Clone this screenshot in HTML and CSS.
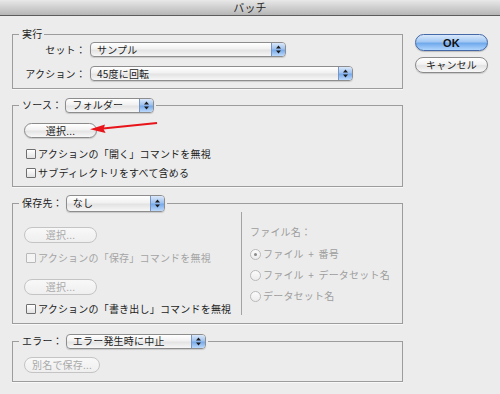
FILE: index.html
```html
<!DOCTYPE HTML>
<html>

<head>
  <meta charset="utf-8">
  <link rel="stylesheet" href="styles.css">
</head>

<body>
<div class="titlebar">バッチ</div>

<div class="dialog">
  <div class="main">

    <div class="group group-run">
      <div class="legend">実行</div>
      <div class="row">
        <span class="label">セット：</span>
        <div class="popup popup-set"><span class="popup-text">サンプル</span><span class="arrows"><svg width="5" height="9" viewBox="0 0 5 9"><path d="M0 3.5L2.5 0.5L5 3.5Z M0 5.5L2.5 8.5L5 5.5Z" fill="#1c1c1c"/></svg></span></div>
      </div>
      <div class="row row-next">
        <span class="label">アクション：</span>
        <div class="popup popup-action"><span class="popup-text">45度に回転</span><span class="arrows"><svg width="5" height="9" viewBox="0 0 5 9"><path d="M0 3.5L2.5 0.5L5 3.5Z M0 5.5L2.5 8.5L5 5.5Z" fill="#1c1c1c"/></svg></span></div>
      </div>
    </div>

    <div class="group group-source">
      <div class="legend">
        <span>ソース：</span>
        <div class="popup popup-folder"><span class="popup-text">フォルダー</span><span class="arrows"><svg width="5" height="9" viewBox="0 0 5 9"><path d="M0 3.5L2.5 0.5L5 3.5Z M0 5.5L2.5 8.5L5 5.5Z" fill="#1c1c1c"/></svg></span></div>
      </div>
      <div class="push push-choose">選択...</div>
      <label class="check check-first"><span class="box"></span>アクションの「開く」コマンドを無視</label>
      <label class="check check-next"><span class="box"></span>サブディレクトリをすべて含める</label>
    </div>

    <div class="group group-save">
      <div class="legend legend-tall">
        <span>保存先：</span>
        <div class="popup popup-none"><span class="popup-text">なし</span><span class="arrows"><svg width="5" height="9" viewBox="0 0 5 9"><path d="M0 3.5L2.5 0.5L5 3.5Z M0 5.5L2.5 8.5L5 5.5Z" fill="#1c1c1c"/></svg></span></div>
      </div>
      <div class="save-body">
        <div class="save-left">
          <div class="push push-disabled push-save1">選択...</div>
          <label class="check check-disabled check-save1"><span class="box"></span>アクションの「保存」コマンドを無視</label>
          <div class="push push-disabled push-save2">選択...</div>
          <label class="check check-save2"><span class="box"></span>アクションの「書き出し」コマンドを無視</label>
        </div>
        <div class="save-right">
          <div class="filename">ファイル名：</div>
          <div class="radio radio-first"><span class="circle circle-on"></span>ファイル + 番号</div>
          <div class="radio"><span class="circle"></span>ファイル + データセット名</div>
          <div class="radio"><span class="circle"></span>データセット名</div>
        </div>
      </div>
    </div>

    <div class="group group-error">
      <div class="legend">
        <span>エラー：</span>
        <div class="popup popup-error"><span class="popup-text">エラー発生時に中止</span><span class="arrows"><svg width="5" height="9" viewBox="0 0 5 9"><path d="M0 3.5L2.5 0.5L5 3.5Z M0 5.5L2.5 8.5L5 5.5Z" fill="#1c1c1c"/></svg></span></div>
      </div>
      <div class="push push-disabled push-saveas">別名で保存...</div>
    </div>

  </div>

  <div class="side">
    <div class="btn-ok">OK</div>
    <div class="btn-cancel">キャンセル</div>
  </div>
</div>

<!-- red annotation arrow pointing at the source button -->
<svg class="pointer" width="72" height="16" viewBox="0 0 72 16">
  <line x1="69" y1="4" x2="15" y2="9.6" stroke="#e8141a" stroke-width="2"/>
  <path d="M2 10.3L17 5.6L15.5 10L17.6 14Z" fill="#e8141a"/>
</svg>

</body>

</html>
```

FILE: styles.css
```css
/* диалог "バッチ" */

body {
  margin: 0;
  width: 500px;
  height: 394px;
  position: relative;
  overflow: hidden;
  background: #ececec;
  font-family: "Noto Sans CJK JP", "Liberation Sans", sans-serif;
  font-size: 10px;
  letter-spacing: 0.2px;
  line-height: 16px;
  color: #1c1c1c;
}

.titlebar {
  height: 15px;
  border-bottom: 1px solid #5c5c5c;
  background: linear-gradient(#e8e8e8, #cdcdcd 55%, #b6b6b6);
  text-align: center;
  font-size: 11px;
  line-height: 15px;
  color: #262626;
}

.dialog {
  display: flex;
  gap: 12px;
  padding: 18px 12px 0 12px;
}

.main {
  width: 391px;
}

.group {
  border: 1px solid #9c9c9c;
  box-shadow: 0 1px 0 #f8f8f8;
}

.legend {
  display: flex;
  align-items: center;
  gap: 3px;
  width: fit-content;
  height: 16px;
  margin: -9px 0 0 6px;
  padding: 0 2px 0 3px;
  background: #ececec;
}

.legend-tall {
  height: 18px;
  margin-top: -10px;
}

/* popup menus */

.popup {
  display: flex;
  align-items: center;
  box-sizing: border-box;
  height: 15px;
  border: 1px solid #8d8d8d;
  border-radius: 4px;
  background: linear-gradient(#ffffff, #f1f1f1 45%, #e3e3e3 55%, #f7f7f7);
  box-shadow: 0 1px 1px rgba(0, 0, 0, 0.15);
  overflow: hidden;
}

.popup-text {
  flex: 1;
  padding-left: 6px;
  white-space: nowrap;
}

.arrows {
  display: flex;
  align-items: center;
  justify-content: center;
  width: 13px;
  height: 100%;
  border-left: 1px solid #7896c4;
  background: linear-gradient(#dbe8fa, #9fc2ef 45%, #78aaea 55%, #bcd9fb);
}

.popup-set {
  width: 196px;
}

.popup-action {
  width: 263px;
}

.popup-folder {
  width: 89px;
}

.popup-none {
  width: 99px;
  height: 17px;
}

.popup-error {
  width: 140px;
}

/* run group */

.row {
  display: flex;
  align-items: center;
  height: 15px;
}

.row-next {
  margin-top: 9px;
}

.label {
  width: 73px;
  margin-right: 4px;
  text-align: right;
  white-space: nowrap;
}

.group-run {
  padding-bottom: 7px;
}

/* push buttons */

.push {
  display: flex;
  align-items: center;
  justify-content: center;
  box-sizing: border-box;
  width: 73px;
  height: 15px;
  border: 1px solid #8a8a8a;
  border-radius: 8px;
  background: linear-gradient(#ffffff, #f2f2f2 45%, #e4e4e4 55%, #f8f8f8);
  box-shadow: 0 1px 1px rgba(0, 0, 0, 0.15);
}

.push-disabled {
  height: 16px;
  border-color: #c4c4c4;
  color: #a9a9a9;
  background: linear-gradient(#f8f8f8, #efefef);
  box-shadow: none;
}

/* check boxes */

.check {
  display: flex;
  align-items: center;
  height: 16px;
  margin-left: 13px;
  white-space: nowrap;
}

.box {
  box-sizing: border-box;
  width: 10px;
  height: 10px;
  margin-right: 2px;
  border: 1px solid #6f6f6f;
  border-radius: 1px;
  background: linear-gradient(#ffffff, #e2e2e2);
}

.check-disabled {
  color: #a4a4a4;
}

.check-disabled .box {
  border-color: #b9b9b9;
  background: #f4f4f4;
}

/* source group */

.group-source {
  margin-top: 16px;
  padding-bottom: 5px;
}

.push-choose {
  margin: 10px 0 0 11px;
}

.check-first {
  margin-top: 8px;
}

.check-next {
  margin-top: 3px;
}

/* save group */

.group-save {
  margin-top: 16px;
}

.save-body {
  display: flex;
  padding-bottom: 6px;
}

.save-left {
  width: 217px;
  padding-left: 11px;
}

.save-left .check {
  margin-left: 2px;
}

.push-save1 {
  margin-top: 15px;
}

.check-save1 {
  margin-top: 7px;
}

.push-save2 {
  margin-top: 13px;
}

.check-save2 {
  margin-top: 6px;
}

.save-right {
  height: 103px;
  padding-left: 8px;
  border-left: 1px solid #a3a3a3;
  color: #9d9d9d;
}

.filename {
  margin-top: 12px;
  height: 16px;
}

.radio {
  display: flex;
  align-items: center;
  height: 16px;
  margin-top: 5px;
  white-space: pre;
  word-spacing: 2px;
}

.radio-first {
  margin-top: 6px;
}

.circle {
  display: flex;
  align-items: center;
  justify-content: center;
  box-sizing: border-box;
  width: 11px;
  height: 11px;
  margin-right: 2px;
  border: 1px solid #bababa;
  border-radius: 50%;
  background: linear-gradient(#fbfbfb, #ececec);
}

.circle-on::after {
  content: "";
  width: 3px;
  height: 3px;
  border-radius: 50%;
  background: #8a8a8a;
}

/* error group */

.group-error {
  margin-top: 17px;
  padding-bottom: 8px;
}

.push-saveas {
  width: 76px;
  margin: 8px 0 0 11px;
}

/* dialog buttons */

.side {
  display: flex;
  flex-direction: column;
  gap: 6px;
  width: 73px;
}

.btn-ok,
.btn-cancel {
  display: flex;
  align-items: center;
  justify-content: center;
  box-sizing: border-box;
  border-radius: 9px;
}

.btn-ok {
  height: 17px;
  border: 1px solid #4469a6;
  background: linear-gradient(#d9e8fb, #a3c8f3 45%, #70a9ec 55%, #b0d5fc);
  font-family: "Liberation Sans", sans-serif;
  font-size: 11px;
  font-weight: bold;
  color: #111;
  box-shadow: 0 1px 1px rgba(0, 0, 0, 0.2);
}

.btn-cancel {
  height: 16px;
  border: 1px solid #8a8a8a;
  background: linear-gradient(#ffffff, #f2f2f2 45%, #e3e3e3 55%, #f8f8f8);
  box-shadow: 0 1px 1px rgba(0, 0, 0, 0.15);
}

.pointer {
  position: absolute;
  left: 88px;
  top: 119px;
}
```
